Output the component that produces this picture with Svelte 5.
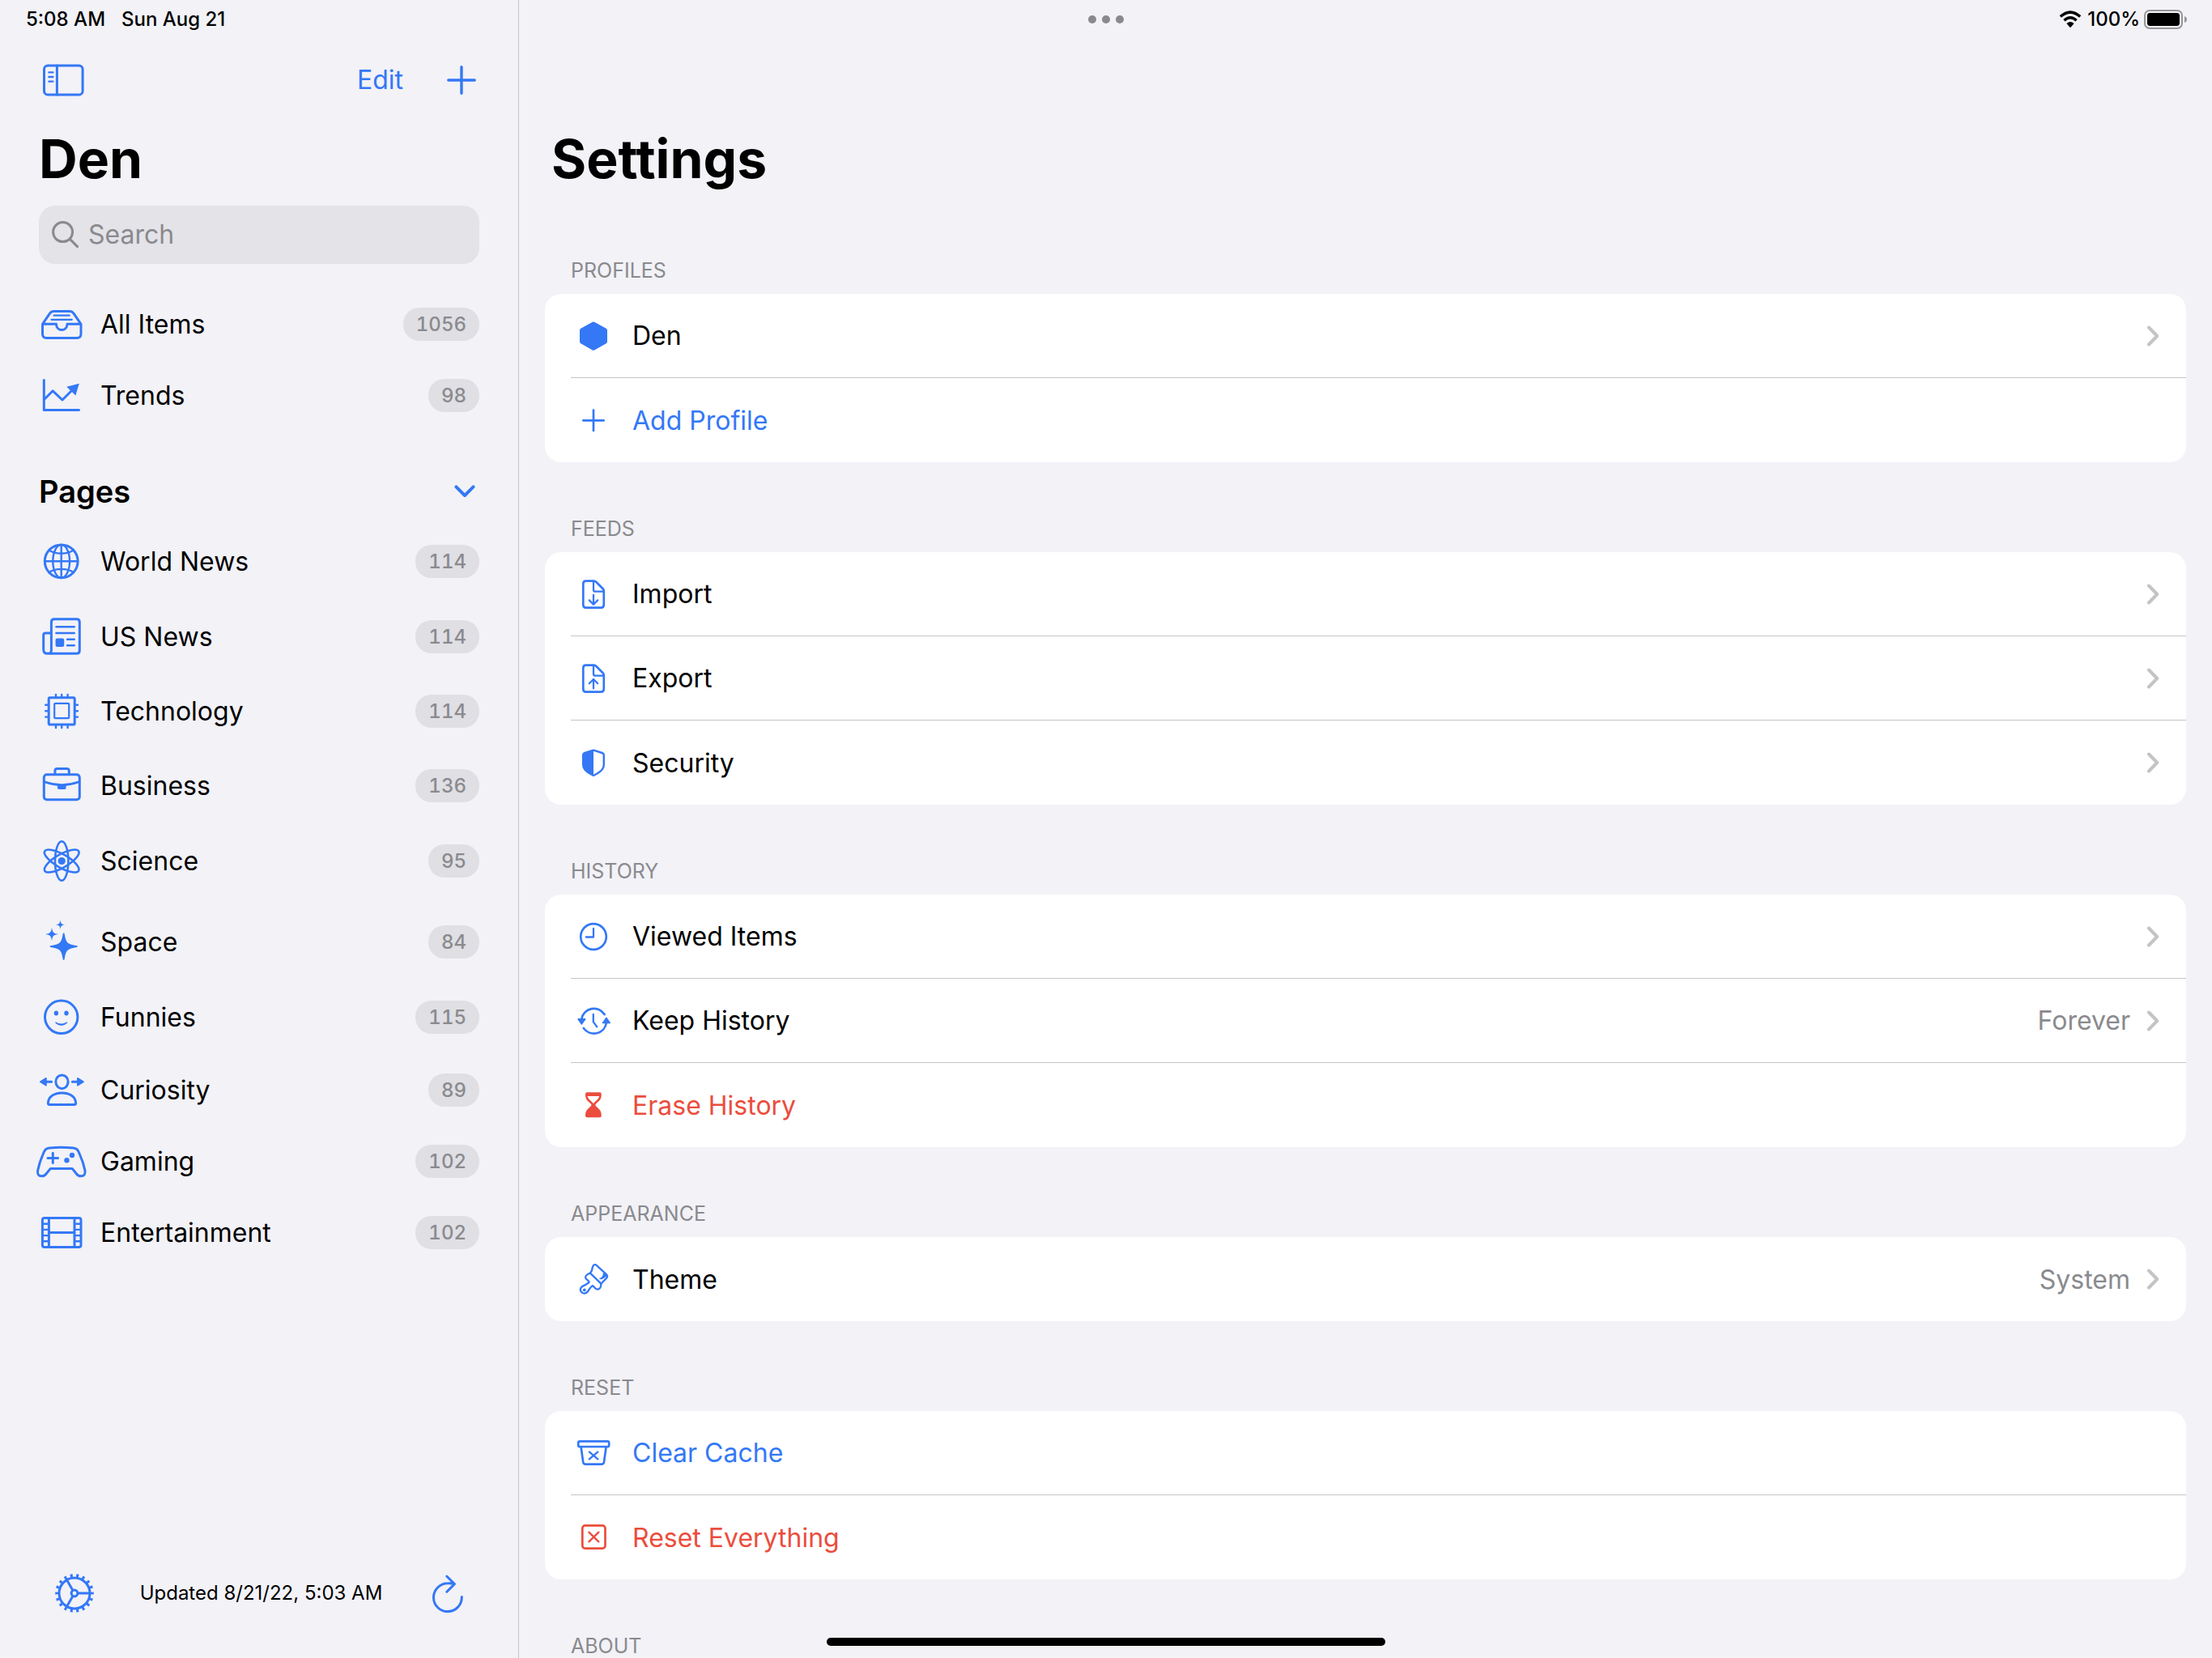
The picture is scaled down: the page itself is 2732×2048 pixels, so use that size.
<script>
  const solid = 'fill="currentColor" stroke="none"';

  const icons = {
    tray: `<path d="M8.5 32.3 L17.5 19.2 Q19.3 16.5 22.5 16.5 H42 Q45.2 16.5 47 19.2 L56 32.3 V44.5 Q56 49.5 51 49.5 H13.5 Q8.5 49.5 8.5 44.5 Z M8.5 32.3 H25.5 C25.5 42 39 42 39 32.3 H56"/><path stroke-width="2.2" d="M22.5 21.7 H41.8 M19.5 26.8 H44.8"/>`,
    trends: `<path d="M10.3 13.5 V50.5 H53.5 M10.8 37.3 L21.2 26.8 L33 38 L45 26"/><path ${solid} d="M53.8 17.8 L38.3 21.8 L49.4 32.6 Z"/>`,
    globe: `<circle cx="31.7" cy="32.3" r="20.4"/><g stroke-width="2.4"><ellipse cx="31.7" cy="32.3" rx="10.4" ry="20.4"/><path d="M31.7 12 V52.6 M11.4 32.3 H52 M16.5 18.4 C24 24.2 39.4 24.2 46.9 18.4 M16.5 46.2 C24 40.4 39.4 40.4 46.9 46.2"/></g>`,
    newspaper: `<path d="M19.4 49.5 V14.5 Q19.4 10.8 23.1 10.8 H50.6 Q54.3 10.8 54.3 14.5 V49.5 Q54.3 53.3 50.6 53.3 H14.5 Q9.7 53.3 9.7 48.5 V30.5 Q9.7 28 12.2 28 H19.4 M19.4 49.5 Q19.4 53.3 14.8 53.3"/><path stroke-width="2.4" d="M25.4 20.3 H47.8 M25.4 28 H47.8 M39 35.7 H47.8 M39 43.3 H47.8"/><rect ${solid} x="24.6" y="34.5" width="10.6" height="10.4" rx="2"/>`,
    cpu: `<rect x="16.2" y="15.8" width="32" height="33.2" rx="1.6"/><rect stroke-width="2.2" x="23.2" y="22.8" width="18" height="18.4" rx="1"/><path stroke-width="2.4" d="M25 12 V15 M32.2 12 V15 M39.6 12 V15 M25 50 V53 M32.2 50 V53 M39.6 50 V53 M12.2 24.7 H15 M12.2 32.2 H15 M12.2 39.6 H15 M49.4 24.7 H52 M49.4 32.2 H52 M49.4 39.6 H52"/>`,
    briefcase: `<rect x="10.3" y="18.8" width="44" height="31" rx="3.6"/><path d="M23.9 18 V14.4 Q23.9 11.6 26.7 11.6 H38.5 Q41.3 11.6 41.3 14.4 V18"/><path stroke-width="2.6" d="M11 27.8 Q32.3 35.4 53.6 27.8"/><path ${solid} d="M27 31 H37.6 V35 Q37.6 37 35.6 37 H29 Q27 37 27 35 Z"/>`,
    atom: `<g stroke-width="2.6"><ellipse cx="32.2" cy="32.5" rx="8.2" ry="24.2"/><ellipse cx="32.2" cy="32.5" rx="8.2" ry="24.2" transform="rotate(60 32.2 32.5)"/><ellipse cx="32.2" cy="32.5" rx="8.2" ry="24.2" transform="rotate(-60 32.2 32.5)"/></g><circle ${solid} cx="32.2" cy="32.5" r="4.6"/>`,
    sparkles: `<g ${solid}><path d="M34.7 21.2 Q35.6 21.2 35.8 23 C37.5 33.5 39.2 35.2 50 37 Q51.8 37.2 51.8 38.1 Q51.8 39 50 39.2 C39.2 41 37.5 42.7 35.8 53.2 Q35.6 55 34.7 55 Q33.8 55 33.6 53.2 C31.9 42.7 30.2 41 19.4 39.2 Q17.6 39 17.6 38.1 Q17.6 37.2 19.4 37 C30.2 35.2 31.9 33.5 33.6 23 Q33.8 21.2 34.7 21.2 Z"/><path d="M20 14.8 C20.9 21 22 22.1 28.2 23 C22 23.9 20.9 25 20 31.2 C19.1 25 18 23.9 11.8 23 C18 22.1 19.1 21 20 14.8 Z"/><path d="M30.5 5.6 C31.1 9.9 31.9 10.7 36.2 11.3 C31.9 11.9 31.1 12.7 30.5 17 C29.9 12.7 29.1 11.9 24.8 11.3 C29.1 10.7 29.9 9.9 30.5 5.6 Z"/></g>`,
    smile: `<circle cx="31.7" cy="32.3" r="20.2"/><g ${solid}><ellipse cx="25.4" cy="27.4" rx="2.7" ry="3"/><ellipse cx="38" cy="27.4" rx="2.7" ry="3"/><path d="M24.8 38.2 Q31.7 42.6 38.6 38.2 Q39.8 38.6 38.6 40 Q31.7 46.2 24.8 40 Q23.6 38.6 24.8 38.2 Z"/></g>`,
    person: `<ellipse cx="32.5" cy="22.3" rx="7.6" ry="8.4"/><path d="M15.4 48.5 C15.8 31.8 49.2 31.8 49.6 48.5 Q49.6 50.6 47.6 50.6 H17.4 Q15.4 50.6 15.4 48.5 Z M11 22.3 H19.6 M45.4 22.3 H54"/><path fill="currentColor" stroke-width="1.6" d="M5.8 22.3 L13 17.8 V26.8 Z M59 22.3 L51.8 17.8 V26.8 Z"/>`,
    gamepad: `<path d="M12.5 17.6 Q14 16.2 17 15.9 Q31.8 14.4 46.5 15.9 Q49.5 16.2 51 17.6 Q53 19.5 54.5 24 Q59 34 61 44 Q61.8 50.8 56 50.8 Q52.6 50.8 50.5 48 L45.2 41.4 H18.4 L13 48 Q10.9 50.8 7.5 50.8 Q1.8 50.8 2.6 44 Q4.6 34 9 24 Q10.5 19.5 12.5 17.6 Z M21.3 22.2 V34.6 M15 28.4 H27.6"/><g ${solid}><circle cx="45" cy="25" r="3.2"/><circle cx="38.5" cy="31.3" r="3.2"/></g>`,
    film: `<rect x="8.4" y="14.4" width="47.6" height="36.2" rx="2.6"/><path d="M16.4 15 V50 M48 15 V50 M16.4 32.4 H48"/><path stroke-width="2.4" stroke-linecap="butt" d="M8.4 21.7 H16.4 M8.4 28.9 H16.4 M8.4 36.1 H16.4 M8.4 43.3 H16.4 M48 21.7 H56 M48 28.9 H56 M48 36.1 H56 M48 43.3 H56"/>`,

    hexagon: `<path fill="currentColor" stroke-width="5" d="M28 13 L42.5 21 V35 L28 43.2 L13.5 35 V21 Z"/>`,
    add: `<path d="M28 15.6 V41 M15.3 28.3 H40.7"/>`,
    docDown: `<path d="M15.3 15 Q15.3 11.6 18.7 11.6 H28.4 Q30 11.6 31.2 12.8 L39.6 21.2 Q40.8 22.4 40.8 24 V41 Q40.8 44.6 37.3 44.6 H18.7 Q15.3 44.6 15.3 41 Z"/><path stroke-width="2.3" d="M28 12 V22.4 Q28 24.6 30.2 24.6 H40.4 M28 28.8 V40.4 M22.8 35.4 L28 40.6 L33.2 35.4"/>`,
    docUp: `<path d="M15.3 15 Q15.3 11.6 18.7 11.6 H28.4 Q30 11.6 31.2 12.8 L39.6 21.2 Q40.8 22.4 40.8 24 V41 Q40.8 44.6 37.3 44.6 H18.7 Q15.3 44.6 15.3 41 Z"/><path stroke-width="2.3" d="M28 12 V22.4 Q28 24.6 30.2 24.6 H40.4 M28 40.4 V29 M22.8 34.2 L28 29 L33.2 34.2"/>`,
    shield: `<path stroke-width="2.4" d="M28 12.6 L38.6 16 Q40.8 16.8 40.8 19 V30 Q40.8 35 37 38.4 Q33.6 41.4 28 44 Q22.4 41.4 19 38.4 Q15.2 35 15.2 30 V19 Q15.2 16.8 17.4 16 Z"/><path ${solid} d="M28 12 L17 15.8 Q15 16.6 15 19 V30 Q15 35 19 38.4 Q22.4 41.4 28 44.4 Z"/>`,
    clock: `<circle cx="28" cy="28" r="15.8"/><path stroke-width="2.3" d="M28 17.8 V28.5 H18.8"/>`,
    history: `<path d="M13.2 26 A15.5 15.5 0 0 1 41.6 20 M15.8 37 A15.5 15.5 0 0 0 43.8 30.6"/><path fill="currentColor" stroke-width="1.4" d="M9 25.8 H17.8 L13.4 32.2 Z M39.4 30.6 H48.4 L43.9 24.2 Z"/><path stroke-width="2.3" d="M27.8 20 V29.2 L32.2 35.4"/>`,
    hourglass: `<path ${solid} fill-rule="evenodd" d="M20.2 12.3 H35.6 Q37.8 12.3 37.8 14.4 C37.8 21 35.5 22.4 31 26.4 Q29.6 27.8 31 29.2 C35.5 33.2 37.8 35 37.8 41.2 Q37.8 43.3 35.6 43.3 H20.2 Q18 43.3 18 41.2 C18 35 20.3 33.2 24.8 29.2 Q26.2 27.8 24.8 26.4 C20.3 22.4 18 21 18 14.4 Q18 12.3 20.2 12.3 Z M20.6 17 C21.4 20.6 24.4 22.4 27.9 26 C31.4 22.4 34.4 20.6 35.2 17 Z"/>`,
    brush: `<g stroke-width="2.3"><path d="M24 20.6 Q26.6 17.4 26.8 13.4 Q28.6 8.6 31.6 10.8 L44 22.2 Q46 24.4 44.2 26.6 L37 34"/><path d="M24 20.6 L37.4 33.6 Q37.6 36 36.4 38.6 Q33.8 42 30.6 39.6 L27 36.2 Q25.4 36.6 21.6 42.4 Q18.6 47 14.4 45 Q9.6 41.4 13.6 37.4 Q18.6 35 22.6 32 Q23.2 31.4 19.4 28.2 Q16.8 25.4 19.6 23 Q21.4 21.2 24 20.6 Z"/></g><path ${solid} d="M41.8 20.6 L45 24 L40.6 27 Q37.4 29.4 34.8 27.6 Q40.4 25.6 39.6 20.6 Z"/><circle ${solid} cx="16.8" cy="41.4" r="1.9"/>`,
    bin: `<rect x="9.2" y="13.4" width="38" height="6.6" rx="1.8"/><path d="M12.6 20.4 L15.2 39 Q15.7 41.6 18.2 41.6 H38 Q40.5 41.6 41 39 L43.6 20.4"/><path stroke-width="2.3" d="M22.8 26.4 L33.4 35.4 M33.4 26.4 L22.8 35.4"/>`,
    boxX: `<rect x="14.3" y="13.4" width="28.2" height="28.2" rx="3.4"/><path stroke-width="2.3" d="M22.4 21.6 L34.4 33.4 M34.4 21.6 L22.4 33.4"/>`
  };

  const smart = [
    { label: 'All Items', icon: 'tray', count: 1056 },
    { label: 'Trends', icon: 'trends', count: 98 }
  ];

  const pages = [
    { label: 'World News', icon: 'globe', count: 114, size: 'tall' },
    { label: 'US News', icon: 'newspaper', count: 114, size: 'medium' },
    { label: 'Technology', icon: 'cpu', count: 114, size: 'medium' },
    { label: 'Business', icon: 'briefcase', count: 136, size: 'medium' },
    { label: 'Science', icon: 'atom', count: 95, size: 'tall' },
    { label: 'Space', icon: 'sparkles', count: 84, size: 'tall spaced' },
    { label: 'Funnies', icon: 'smile', count: 115, size: 'medium' },
    { label: 'Curiosity', icon: 'person', count: 89 },
    { label: 'Gaming', icon: 'gamepad', count: 102 },
    { label: 'Entertainment', icon: 'film', count: 102 }
  ];

  const sections = [
    {
      title: 'PROFILES',
      rows: [
        { label: 'Den', icon: 'hexagon', link: true },
        { label: 'Add Profile', icon: 'add', tone: 'accent' }
      ]
    },
    {
      title: 'FEEDS',
      rows: [
        { label: 'Import', icon: 'docDown', link: true },
        { label: 'Export', icon: 'docUp', link: true },
        { label: 'Security', icon: 'shield', link: true }
      ]
    },
    {
      title: 'HISTORY',
      rows: [
        { label: 'Viewed Items', icon: 'clock', link: true },
        { label: 'Keep History', icon: 'history', link: true, value: 'Forever' },
        { label: 'Erase History', icon: 'hourglass', tone: 'danger' }
      ]
    },
    {
      title: 'APPEARANCE',
      rows: [{ label: 'Theme', icon: 'brush', link: true, value: 'System' }]
    },
    {
      title: 'RESET',
      rows: [
        { label: 'Clear Cache', icon: 'bin', tone: 'accent' },
        { label: 'Reset Everything', icon: 'boxX', tone: 'danger' }
      ]
    },
    { title: 'ABOUT', rows: [] }
  ];

  let query = $state('');
  let open = $state(true);
</script>

{#snippet navRow(item)}
  <li>
    <a class="nav-row {item.size ?? ''}" href="#{item.icon}">
      <svg class="nav-icon" viewBox="0 0 64 64" aria-hidden="true">{@html icons[item.icon]}</svg>
      <span class="nav-label">{item.label}</span>
      <span class="badge">{item.count}</span>
    </a>
  </li>
{/snippet}

{#snippet rowContent(row)}
  <svg class="row-icon" viewBox="0 0 56 56" aria-hidden="true">{@html icons[row.icon]}</svg>
  <span class="row-label">{row.label}</span>
  {#if row.value}<span class="row-value">{row.value}</span>{/if}
  {#if row.link}
    <svg class="disclosure" viewBox="0 0 16 26" aria-hidden="true"><path d="M3 2.5 L13.2 13 L3 23.5" /></svg>
  {/if}
{/snippet}

<div class="app">
  <div class="status">
    <div class="status-left"><span>5:08 AM</span><span>Sun Aug 21</span></div>
    <button class="dots" aria-label="Multitasking"><i></i><i></i><i></i></button>
    <div class="status-right">
      <svg class="wifi" viewBox="0 0 28 22" aria-hidden="true">
        <path d="M1.8 7.6 Q14 -3.4 26.2 7.6" />
        <path d="M6.4 12.2 Q14 5.4 21.6 12.2" />
        <path class="fill" d="M9.4 16 Q14 12.2 18.6 16 L14.8 20.4 Q14 21.2 13.2 20.4 Z" />
      </svg>
      <span>100%</span>
      <svg class="battery" viewBox="0 0 54 24" aria-hidden="true">
        <rect class="shell" x="1" y="1" width="46" height="22" rx="6" />
        <rect x="4" y="4" width="40" height="16" rx="3.4" />
        <path class="nub" d="M50 8 Q53 9 53 12 Q53 15 50 16 Z" />
      </svg>
    </div>
  </div>

  <aside class="sidebar">
    <div class="toolbar">
      <button class="toggle" aria-label="Toggle sidebar">
        <svg viewBox="0 0 52 40" aria-hidden="true">
          <rect x="2.5" y="1.9" width="47.6" height="36.2" rx="4.6" />
          <path d="M18.4 2 V38" />
          <path class="thin" d="M8.4 10.4 H13.4 M8.4 16 H13.4 M8.4 21.6 H13.4" />
        </svg>
      </button>
      <div class="actions">
        <button class="edit">Edit</button>
        <button class="plus" aria-label="Add">
          <svg viewBox="0 0 36 36" aria-hidden="true"><path d="M18 1.8 V34.2 M1.8 18 H34.2" /></svg>
        </button>
      </div>
    </div>

    <h1>Den</h1>

    <label class="search">
      <svg viewBox="0 0 34 34" aria-hidden="true"><circle cx="13.6" cy="13.6" r="12" /><path d="M22.4 22.4 L31.6 31.6" /></svg>
      <input type="text" placeholder="Search" aria-label="Search" bind:value={query} />
    </label>

    <nav>
      <ul>
        {#each smart as item}{@render navRow(item)}{/each}
      </ul>
      <h2>
        <button class="group" aria-expanded={open} onclick={() => (open = !open)}>
          Pages
          <svg viewBox="0 0 28 18" aria-hidden="true"><path d="M3.4 3.4 L14 14 L24.6 3.4" /></svg>
        </button>
      </h2>
      {#if open}
        <ul>
          {#each pages as item}{@render navRow(item)}{/each}
        </ul>
      {/if}
    </nav>

    <footer>
      <button aria-label="Settings">
        <svg viewBox="0 0 48 48" aria-hidden="true">
          <circle cx="24" cy="24" r="19" />
          <circle class="teeth" cx="24" cy="24" r="21.8" pathLength="180" />
          <circle cx="24" cy="24" r="3.9" />
          <path d="M28.4 24 H42.4 M21.8 20.2 L14.6 7.7 M21.8 27.8 L14.6 40.3" />
        </svg>
      </button>
      <span>Updated 8/21/22, 5:03 AM</span>
      <button aria-label="Refresh">
        <svg viewBox="0 0 48 48" aria-hidden="true">
          <path d="M41.3 28.6 A17.4 17.4 0 1 1 23.9 11.8 Q28 11.4 32.2 12.6 M22.8 3 L32.4 12.6 L22.8 22.2" />
        </svg>
      </button>
    </footer>
  </aside>

  <main>
    <h1>Settings</h1>
    {#each sections as section}
      <section>
        <h3>{section.title}</h3>
        {#if section.rows.length}
          <ul class="card">
            {#each section.rows as row}
              <li>
                {#if row.link}
                  <a class="row" href="#{row.icon}">{@render rowContent(row)}</a>
                {:else}
                  <button class="row {row.tone}">{@render rowContent(row)}</button>
                {/if}
              </li>
            {/each}
          </ul>
        {/if}
      </section>
    {/each}
  </main>

  <div class="home"></div>
</div>

<style>
  :global(body) {
    background: #f2f2f7;
  }

  .app {
    --blue: #3478f6;
    --red: #eb4d3d;
    --gray: #8a8a8e;
    --line: #c6c6c8;
    position: relative;
    display: flex;
    height: 100vh;
    overflow: hidden;
    background: #f2f2f7;
    color: #000;
    font-family: Inter, "Liberation Sans", sans-serif;
    font-size: 32px;
    line-height: 40px;
  }

  h1,
  h2,
  h3,
  ul {
    margin: 0;
    padding: 0;
    list-style: none;
  }

  button {
    padding: 0;
    border: 0;
    background: none;
    color: var(--blue);
    font: inherit;
    text-align: left;
    cursor: pointer;
  }

  a {
    color: inherit;
    text-decoration: none;
  }

  svg {
    display: block;
    flex: none;
    fill: none;
    stroke: currentColor;
    stroke-width: 3;
    stroke-linecap: round;
    stroke-linejoin: round;
  }

  h1 {
    font-size: 66px;
    font-weight: 700;
    line-height: 80px;
  }

  /* Status bar */
  .status {
    position: absolute;
    inset: 0 0 auto;
    display: grid;
    grid-template-columns: 1fr auto 1fr;
    align-items: center;
    height: 48px;
    padding: 0 30px;
    font-size: 24px;
    font-weight: 500;
    line-height: 28px;
  }

  .status-left {
    display: flex;
    gap: 20px;
    padding-left: 2px;
  }

  .status-right {
    display: flex;
    align-items: center;
    justify-content: flex-end;
    gap: 5px;
  }

  .dots {
    display: flex;
    gap: 7px;
  }

  .dots i {
    width: 10px;
    height: 10px;
    border-radius: 50%;
    background: #8a8a8e;
  }

  .wifi {
    width: 28px;
    height: 22px;
    margin-right: 2px;
    stroke-width: 3.4;
    stroke-linecap: butt;
  }

  .wifi .fill {
    fill: currentColor;
    stroke: none;
  }

  .battery {
    width: 54px;
    height: 24px;
    fill: currentColor;
    stroke: none;
  }

  .battery .shell {
    fill: none;
    stroke: #97979b;
    stroke-width: 2;
  }

  .battery .nub {
    fill: #97979b;
  }

  /* Sidebar */
  .sidebar {
    display: flex;
    flex: none;
    flex-direction: column;
    box-sizing: border-box;
    width: 641px;
    padding: 48px 48px 0;
    border-right: 1px solid var(--line);
  }

  .toolbar {
    display: flex;
    align-items: center;
    justify-content: space-between;
    height: 101px;
    padding: 0 4px;
  }

  .toggle svg {
    width: 52px;
    height: 40px;
  }

  .toggle .thin {
    stroke-width: 2.4;
  }

  .actions {
    display: flex;
    align-items: center;
    gap: 54px;
  }

  .plus svg {
    width: 36px;
    height: 36px;
    stroke-width: 3.4;
  }

  .sidebar h1 {
    margin: 7px 0 18px;
  }

  .search {
    display: flex;
    align-items: center;
    gap: 11px;
    height: 72px;
    margin-bottom: 30px;
    padding: 0 16px;
    border-radius: 20px;
    background: #e3e3e8;
    color: var(--gray);
  }

  .search svg {
    width: 34px;
    height: 34px;
  }

  .search input {
    flex: 1;
    min-width: 0;
    padding: 0;
    border: 0;
    outline: 0;
    background: none;
    color: #000;
    font: inherit;
  }

  .search input::placeholder {
    color: var(--gray);
    opacity: 1;
  }

  nav {
    flex: 1;
    margin-left: -4px;
  }

  .nav-row {
    display: flex;
    align-items: center;
    gap: 16px;
    height: 88px;
  }

  .nav-row.medium {
    height: 92px;
  }

  .nav-row.tall {
    height: 94px;
  }

  .nav-row.spaced {
    margin-top: 6px;
  }

  .nav-icon {
    width: 64px;
    height: 64px;
    color: var(--blue);
  }

  .nav-label {
    flex: 1;
  }

  .nav-label,
  .row-label,
  .row-value {
    padding-top: 1px;
  }

  .badge {
    padding: 0 16px;
    border-radius: 20px;
    background: #dfdfe4;
    color: var(--gray);
    font-size: 24px;
    font-weight: 500;
    font-variant-numeric: tabular-nums;
    line-height: 41px;
  }

  h2 {
    padding: 36px 0 0 4px;
    font-size: 38px;
    font-weight: 600;
  }

  .group {
    display: flex;
    align-items: center;
    justify-content: space-between;
    width: 100%;
    height: 78px;
    padding-right: 4px;
    color: #000;
  }

  .group svg {
    width: 28px;
    height: 18px;
    color: var(--blue);
    stroke-width: 4;
  }

  footer {
    display: flex;
    align-items: center;
    justify-content: space-between;
    height: 160px;
    padding: 0 15px 0 20px;
    font-size: 24px;
  }

  footer svg {
    width: 48px;
    height: 48px;
  }

  .teeth {
    stroke-width: 4;
    stroke-linecap: butt;
    stroke-dasharray: 4 6;
    stroke-dashoffset: 2;
  }

  /* Settings */
  main {
    flex: 1;
    min-width: 0;
    padding: 156px 32px 0;
    overflow: hidden;
  }

  main h1 {
    margin: 0 0 16px 8px;
  }

  section h3 {
    padding: 67px 32px 13px;
    color: var(--gray);
    font-size: 25px;
    font-weight: 400;
    line-height: 31px;
  }

  .card {
    border-radius: 20px;
    background: #fff;
  }

  .card li {
    padding-left: 32px;
  }

  .row {
    display: flex;
    align-items: center;
    box-sizing: border-box;
    width: 100%;
    height: 104px;
    padding-right: 33px;
    color: #000;
  }

  .card li:not(:last-child) .row {
    border-bottom: 1px solid var(--line);
  }

  .row-icon {
    width: 56px;
    height: 56px;
    margin-right: 20px;
    color: var(--blue);
    stroke-width: 2.7;
  }

  .row-label {
    flex: 1;
  }

  .row-value {
    margin-right: 20px;
    color: var(--gray);
  }

  .row.accent {
    color: var(--blue);
  }

  .row.danger,
  .row.danger .row-icon {
    color: var(--red);
  }

  .disclosure {
    width: 16px;
    height: 26px;
    color: #c4c4c6;
    stroke-width: 4;
  }

  .home {
    position: absolute;
    bottom: 15px;
    left: 50%;
    width: 690px;
    height: 10px;
    margin-left: -345px;
    border-radius: 5px;
    background: #000;
  }
</style>
